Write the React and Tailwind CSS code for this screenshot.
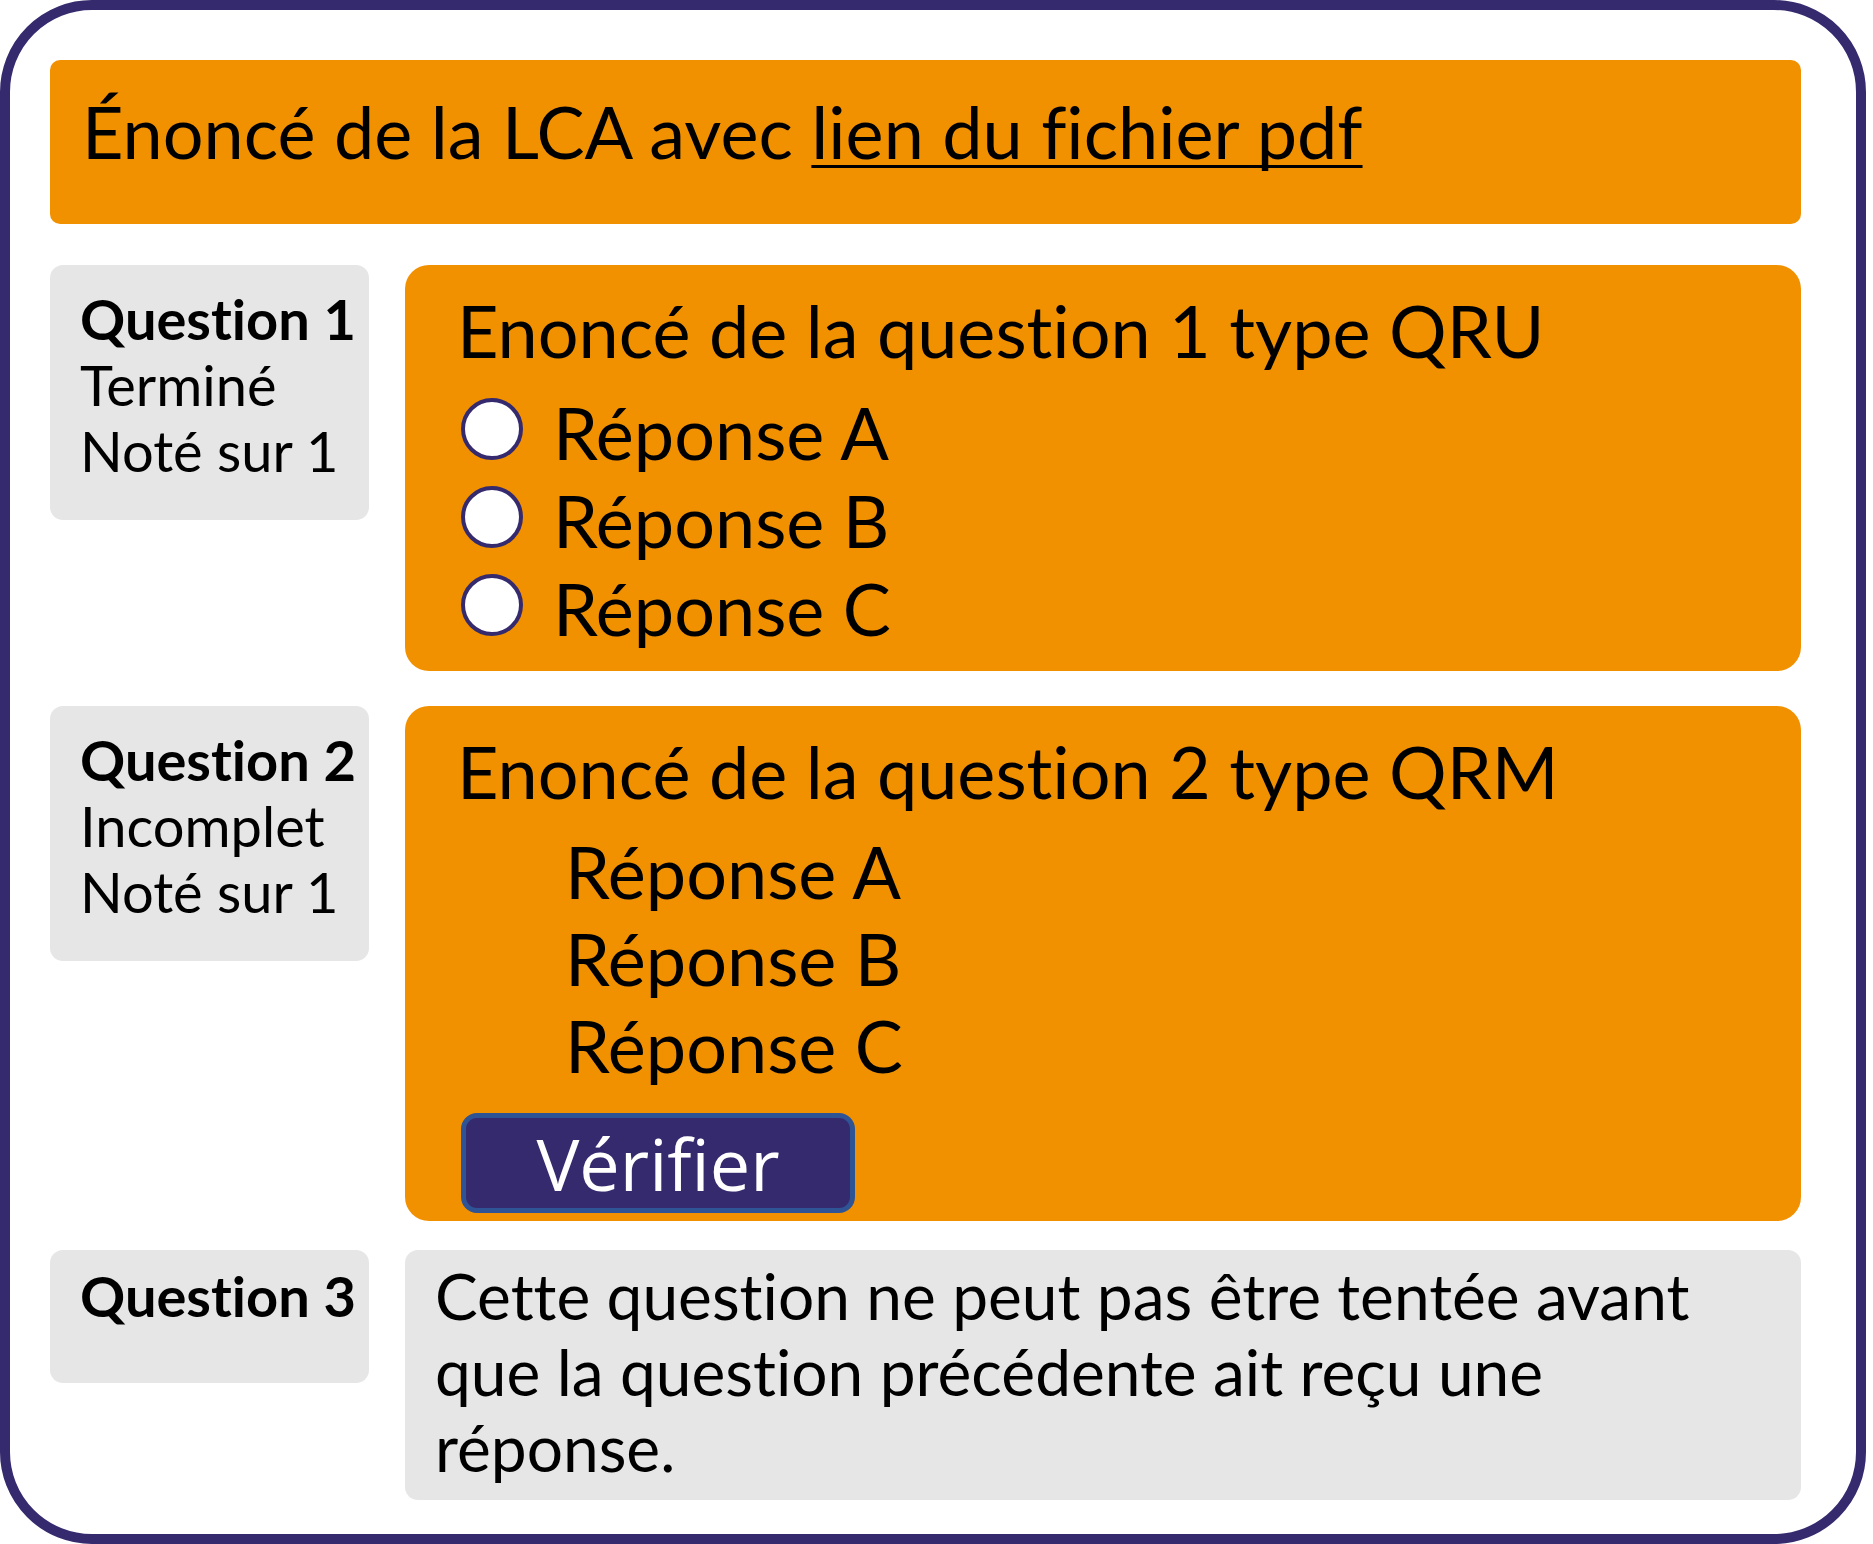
import React from "react";

const answers = ["Réponse A", "Réponse B", "Réponse C"];

const StatusCard = ({ title, lines, className = "" }) => (
  <div
    className={`w-[319px] shrink-0 rounded-[13px] bg-[#e6e6e6] pl-[30px] text-[56px] leading-[66px] text-black ${className}`}
  >
    <p className="font-bold">{title}</p>
    {lines.map((line) => (
      <p key={line}>{line}</p>
    ))}
  </div>
);

const Radio = () => (
  <span className="block h-[62px] w-[62px] shrink-0 rounded-full border-[4px] border-[#352a6e] bg-white" />
);

const App = () => {
  return (
    <div className="h-[1544px] w-[1873px] bg-white font-['Lato',sans-serif] text-black [font-variant-ligatures:none]">
      <div className="box-border h-full w-[1866px] rounded-[92px] border-[10px] border-[#352a6e] pl-[40px] pr-[55px] pt-[50px]">
        {/* sujet */}
        <div className="h-[164px] rounded-[10px] bg-[#f29100] pl-[32px] pt-[26px] text-[72px] leading-[90px]">
          Énoncé de la LCA avec{" "}
          <a
            href="#"
            className="underline decoration-[3px] underline-offset-[6px] [text-decoration-skip-ink:none]"
          >
            lien du fichier pdf
          </a>
        </div>

        {/* question 1 : QRU */}
        <div className="mt-[41px] flex gap-[36px]">
          <StatusCard
            title="Question 1"
            lines={["Terminé", "Noté sur 1"]}
            className="h-[255px] pt-[21px]"
          />
          <div className="h-[406px] flex-1 rounded-[24px] bg-[#f29100] pl-[56px] pt-[21px]">
            <p className="-ml-[4px] text-[72px] leading-[88px]">
              Enoncé de la question 1 type QRU
            </p>
            <div className="mt-[14px] flex flex-col">
              {answers.map((a) => (
                <label key={a} className="flex h-[88px] items-center gap-[30px] text-[72px] leading-[88px]">
                  <span className="-mt-[6px]">
                    <Radio />
                  </span>
                  <span>{a}</span>
                </label>
              ))}
            </div>
          </div>
        </div>

        {/* question 2 : QRM */}
        <div className="mt-[35px] flex gap-[36px]">
          <StatusCard
            title="Question 2"
            lines={["Incomplet", "Noté sur 1"]}
            className="h-[255px] pt-[21px]"
          />
          <div className="h-[515px] flex-1 rounded-[24px] bg-[#f29100] pl-[56px] pt-[21px]">
            <p className="-ml-[4px] text-[72px] leading-[88px]">
              Enoncé de la question 2 type QRM
            </p>
            <div className="mt-[13px] flex flex-col pl-[104px]">
              {answers.map((a) => (
                <p key={a} className="text-[72px] leading-[87px]">
                  {a}
                </p>
              ))}
            </div>
            <button className="mt-[24px] flex h-[100px] w-[394px] items-center justify-center rounded-[16px] border-[5px] border-[#2f5496] bg-[#352a6e] font-['Open_Sans',sans-serif] text-[72px] leading-none text-white">
              Vérifier
            </button>
          </div>
        </div>

        {/* question 3 : verrouillée */}
        <div className="mt-[29px] flex gap-[36px]">
          <StatusCard title="Question 3" lines={[]} className="h-[133px] pt-[13px]" />
          <div className="h-[250px] flex-1 rounded-[13px] bg-[#e6e6e6] pl-[30px] pt-[8px] text-[64px] leading-[76px]">
            Cette question ne peut pas être tentée avant
            <br />
            que la question précédente ait reçu une
            <br />
            réponse.
          </div>
        </div>
      </div>
    </div>
  );
};

export default App;
